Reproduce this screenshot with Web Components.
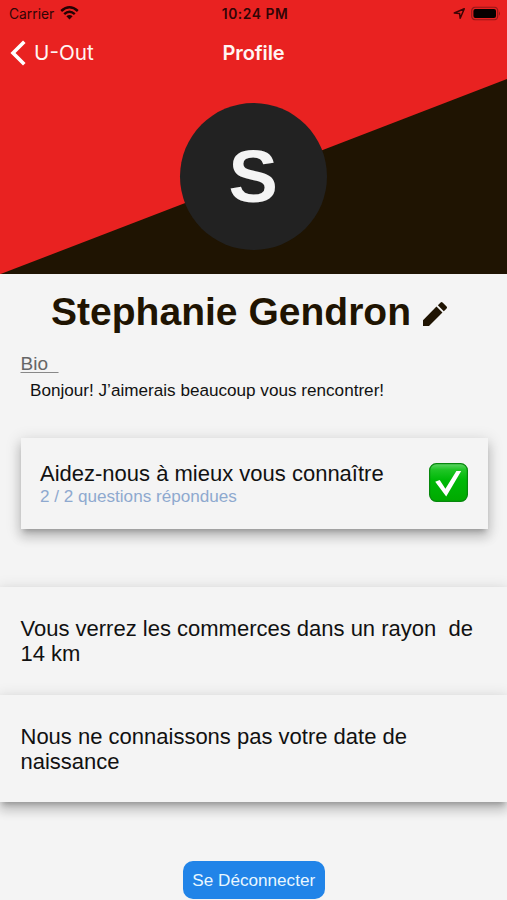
<!DOCTYPE html>
<html lang="fr"><head><meta charset="utf-8"><title>Profile</title>
<style>
html,body{margin:0;background:#f4f4f4;overflow:hidden}
body{font-family:"Liberation Sans",Arial,sans-serif;color:#111}
</style></head><body>
<profile-page></profile-page>
<script>
const define=(name,html)=>customElements.define(name,class extends HTMLElement{
  constructor(){super();this.attachShadow({mode:'open'}).innerHTML=html;}
});

define('status-bar',`<style>
:host{display:grid;grid-template-columns:1fr auto 1fr;align-items:center;height:27px;box-sizing:border-box;padding:0 6px 0 9px;font:400 13.8px/20px Inter,sans-serif;color:#300506}
.l,.r{display:flex;align-items:center}.l{gap:6px}.r{justify-content:flex-end;gap:5px}
b{font-weight:600;font-size:13.8px;letter-spacing:.55px}
svg{display:block}
.r,.l svg{transform:translateY(-.5px)}
</style><div class="l"><span>Carrier</span>
<svg width="19" height="15" viewBox="0 0 19 15"><g fill="none" stroke="#250203" stroke-width="2.5"><path d="M1.2 5.5Q9.5-2 17.8 5.5"/><path d="M4.2 8.6Q9.5 3.9 14.8 8.6"/></g><path fill="#250203" d="M6.4 10.8Q9.5 8.2 12.6 10.8L9.5 14Z"/></svg></div>
<b>10:24 PM</b>
<div class="r"><svg width="13" height="12" viewBox="0 0 13 12"><path d="M1.3 5.5L11.3 1.2L7.2 10.8L6.6 6Z" fill="none" stroke="#3b0405" stroke-width="1.5" stroke-linejoin="round"/></svg>
<svg width="30" height="14" viewBox="0 0 30 14"><rect x=".7" y=".7" width="26" height="12.6" rx="3.6" fill="none" stroke="#94191a" stroke-width="1.2"/><rect x="2.4" y="2.4" width="22.6" height="9.2" rx="2" fill="#050000"/><path d="M28 4.7Q30 7 28 9.3Z" fill="#94191a"/></svg></div>`);

define('nav-bar',`<style>
:host{display:grid;grid-template-columns:1fr auto 1fr;align-items:center;height:51px;padding-left:10px;padding-right:10px;color:#fff5f3;font:400 20.7px/26px Inter,sans-serif}
.back{display:flex;align-items:center;gap:8px}svg{display:block}
b{font-weight:600;font-size:20px;letter-spacing:-.1px}
</style><div class="back"><svg width="16" height="26" viewBox="0 0 16 26"><path d="M14.3 1.8L3 13L14.3 24.2" fill="none" stroke="#fff" stroke-width="3.6"/></svg><span>U-Out</span></div><b><slot></slot></b>`);

define('user-avatar',`<style>
:host{display:flex;align-items:center;justify-content:center;width:147px;height:147px;border-radius:50%;background:#222;color:#f4f4f4;font-weight:700;font-size:74px;line-height:1}
span{transform:translate(-.5px,-.3px)}
</style><span><slot></slot></span>`);

define('profile-hero',`<style>
:host{display:flex;flex-direction:column;height:274.3px;background:#1f1402;position:relative;isolation:isolate}
.bg{position:absolute;inset:0;background:#e92221;clip-path:polygon(0 0,100% 0,100% 79px,0 274.3px);z-index:-1}
user-avatar{align-self:center;margin:25.3px 0 0 .6px}
</style><div class="bg"></div><status-bar></status-bar><nav-bar>Profile</nav-bar><user-avatar>S</user-avatar>`);

define('user-name',`<style>
:host{display:flex;align-items:center;padding:15.5px 0 0 51px;color:#1f1402}
b{font-size:39px;line-height:44px;letter-spacing:.02px;white-space:nowrap}
svg{display:block;margin:4.4px 0 0 8px}
</style><b><slot></slot></b><svg width="32" height="32" viewBox="0 0 24 24"><path fill="currentColor" d="M3 16.6V21h4.5L17.6 10.9l-4.5-4.5L3 16.6zM20.7 7.8a1 1 0 0 0 0-1.41l-3.05-3.05a1 1 0 0 0-1.41 0l-2.1 2.1 4.45 4.45z"/></svg>`);

define('bio-section',`<style>
:host{display:block;padding:19.2px 20.5px 0}
u{display:block;width:max-content;font-size:19px;line-height:22px;color:#666;white-space:pre;text-decoration-color:#888;text-decoration-thickness:1px;text-underline-offset:2px}
p{margin:5px 0 0 9.5px;font-size:17.14px;line-height:20px;white-space:nowrap}
</style><u>Bio  </u><p><slot></slot></p>`);

define('check-mark',`<style>:host,svg{display:block}</style>
<svg width="39" height="39" viewBox="0 0 39 39"><defs><linearGradient id="g" x2="0" y2="1"><stop stop-color="#61d568"/><stop offset=".16" stop-color="#20c526"/><stop offset=".42" stop-color="#00b908"/><stop offset="1" stop-color="#00a900"/></linearGradient></defs><rect x=".6" y=".6" width="37.8" height="37.8" rx="6.8" fill="url(#g)" stroke="#07870d" stroke-width="1.2"/><path d="M6.2 18.7L10.7 17.1L16.4 25.8L27.4 7.9H32.2L17.2 33.6Z" fill="#fff"/></svg>`);

define('question-card',`<style>
:host{display:flex;justify-content:space-between;box-sizing:border-box;height:90.4px;margin:38.2px 19.5px 0 20.5px;padding:24px 20px 0 19.5px;background:#f4f4f4;box-shadow:0 5px 5px -3px rgba(0,0,0,.22),0 8px 10px 1px rgba(0,0,0,.14),0 3px 14px 2px rgba(0,0,0,.12)}
.t{font-size:22px;line-height:24px;white-space:nowrap}
.s{font-size:17.1px;line-height:21px;color:#8ea9cf}
check-mark{margin-top:.5px}
</style><div><div class="t"><slot></slot></div><div class="s"><slot name="sub"></slot></div></div><check-mark></check-mark>`);

define('info-row',`<style>
:host{display:block;box-sizing:border-box;height:107.5px;padding:29px 20.5px 0;background:#f4f4f4;font-size:22px;line-height:25px;box-shadow:0 5px 5px -3px rgba(0,0,0,.22),0 8px 10px 1px rgba(0,0,0,.14),0 3px 14px 2px rgba(0,0,0,.12)}
span{white-space:pre-wrap}
</style><span><slot></slot></span>`);

define('info-list',`<style>
:host{display:block;margin-top:58.8px}
</style><slot></slot>`);

define('logout-button',`<style>
:host{display:block;width:142.5px;margin:58.4px 0 0 182.5px}
button{display:block;width:100%;height:38.5px;padding:0;border:0;border-radius:10px;background:#2184e8;color:#e9f7ff;font:17.14px/38px "Liberation Sans",Arial,sans-serif}
</style><button><slot></slot></button>`);

define('profile-page',`<style>
:host{display:block;width:507px;height:900px;overflow:hidden;background:#f4f4f4}
info-row{position:relative}
</style>
<profile-hero></profile-hero>
<user-name>Stephanie Gendron</user-name>
<bio-section>Bonjour! J’aimerais beaucoup vous rencontrer!</bio-section>
<question-card>Aidez-nous à mieux vous connaître<span slot="sub">2 / 2 questions répondues</span></question-card>
<info-list><info-row>Vous verrez les commerces dans un rayon  de 14 km</info-row><info-row>Nous ne connaissons pas votre date de naissance</info-row></info-list>
<logout-button>Se Déconnecter</logout-button>`);
</script></body></html>
